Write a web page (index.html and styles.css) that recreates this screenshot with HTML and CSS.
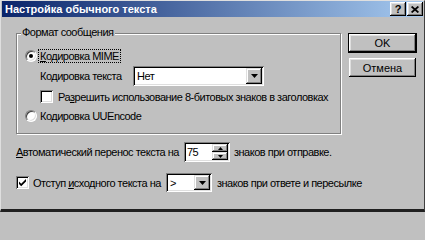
FILE: index.html
```html
<!DOCTYPE html>
<html lang="ru">
<head>
<meta charset="utf-8">
<title>Настройка обычного текста</title>
<link rel="stylesheet" href="styles.css">
</head>
<body>
<div class="window">
  <div class="titlebar">
    <span class="title">Настройка обычного текста</span>
    <div class="tb-buttons">
      <span class="tb-btn help">?</span>
      <span class="tb-btn close"><svg width="8" height="7" viewBox="0 0 8 7"><path d="M0.6 0.5L7.4 6.5M7.4 0.5L0.6 6.5" stroke="#000" stroke-width="1.7" fill="none"/></svg></span>
    </div>
  </div>
  <div class="content">
    <div class="main">
      <div class="group">
        <span class="group-title">Формат сообщения</span>
        <div class="row r-mime"><span class="radio checked"></span><span class="focus"><u>К</u>одировка MIME</span></div>
        <div class="row r-enc">
          <span class="lbl lbl-enc">Кодировка текста</span>
          <div class="combo combo-enc"><span class="combo-val">Нет</span><span class="combo-btn"><svg width="7" height="4" viewBox="0 0 7 4"><path d="M0 0h7L3.5 4z" fill="#000"/></svg></span></div>
        </div>
        <div class="row r-8bit"><span class="check"></span><span class="lbl">Ра<u>з</u>решить использование 8-битовых знаков в заголовках</span></div>
        <div class="row r-uue"><span class="radio"></span><span class="lbl-radio">Кодировка UUEncode</span></div>
      </div>
      <div class="row r-wrap">
        <span class="lbl lbl-wrap"><u>А</u>втоматический перенос текста на</span>
        <div class="spin"><span class="spin-val">75</span><span class="spin-btns"><span class="spin-btn"><svg width="5" height="3" viewBox="0 0 5 3"><path d="M2.5 0L5 3H0z" fill="#000"/></svg></span><span class="spin-btn"><svg width="5" height="3" viewBox="0 0 5 3"><path d="M0 0h5L2.5 3z" fill="#000"/></svg></span></span></div>
        <span class="after after-wrap">знаков при отправке.</span>
      </div>
      <div class="row r-indent">
        <span class="check checked"><svg width="9" height="9" viewBox="0 0 9 9"><path d="M1 3.5L3.2 5.7L8 1V3.4L3.2 8.2L1 6z" fill="#000"/></svg></span>
        <span class="lbl lbl-indent">Отступ <u>и</u>сходного текста на</span>
        <div class="combo combo-indent"><span class="combo-val">&gt;</span><span class="combo-btn"><svg width="7" height="4" viewBox="0 0 7 4"><path d="M0 0h7L3.5 4z" fill="#000"/></svg></span></div>
        <span class="after after-indent">знаков при ответе и пересылке</span>
      </div>
    </div>
    <div class="side">
      <button class="btn default">OK</button>
      <button class="btn cancel">Отмена</button>
    </div>
  </div>
</div>
</body>
</html>
```
FILE: styles.css
```css
html, body {
  margin: 0;
  padding: 0;
  background: #c0c0c0;
}
body {
  font-family: "Liberation Sans", Arial, sans-serif;
  font-size: 11px;
  letter-spacing: -0.5px;
  color: #000;
}
.window {
  width: 425px;
  height: 212px;
  box-sizing: border-box;
  background: #c0c0c0;
  border-top: 1px solid #dfdfdf;
  border-left: 1px solid #dfdfdf;
  border-right: 1px solid #404040;
  border-bottom: 3px solid #202020;
  padding: 0 1px;
  display: flex;
  flex-direction: column;
}
.titlebar {
  height: 16px;
  flex: none;
  display: flex;
  align-items: center;
  justify-content: space-between;
  padding: 0 0 0 3px;
  background: linear-gradient(to right, #0a246a, #a6caf0);
  color: #fff;
}
.title {
  font-weight: bold;
  font-size: 11px;
  letter-spacing: 0;
  line-height: 16px;
}
.tb-buttons {
  display: flex;
  gap: 1px;
}
.tb-btn {
  width: 16px;
  height: 14px;
  box-sizing: border-box;
  background: #c0c0c0;
  box-shadow: inset -1px -1px #000, inset 1px 1px #fff, inset -2px -2px #808080, inset 2px 2px #dfdfdf;
  display: flex;
  align-items: center;
  justify-content: center;
  color: #000;
}
.help {
  font-weight: bold;
  font-size: 11px;
  letter-spacing: 0;
  line-height: 14px;
}
.content {
  display: flex;
  padding: 16px 0 0 14px;
}
.main {
  width: 325px;
  flex: none;
}
.group {
  position: relative;
  height: 101px;
  box-sizing: border-box;
  border: 1px solid #808080;
  box-shadow: inset 1px 1px 0 #fff, 1px 1px 0 #fff;
  padding: 15px 8px 0 8px;
}
.group-title {
  position: absolute;
  top: -8px;
  left: 4px;
  padding: 0 1px;
  background: #c0c0c0;
  line-height: 13px;
}
.row {
  display: flex;
  align-items: center;
  white-space: nowrap;
}
.row > * {
  flex: none;
}
.r-mime {
  height: 14px;
}
.radio {
  width: 12px;
  height: 12px;
  box-sizing: border-box;
  border-radius: 50%;
  background: #fff;
  border: 1px solid;
  border-color: #808080 #fff #fff #808080;
  box-shadow: inset 1px 1px 0 #404040, inset -1px -1px 0 #dfdfdf;
  display: flex;
  align-items: center;
  justify-content: center;
  margin-right: 1px;
}
.radio.checked::after {
  content: "";
  width: 4px;
  height: 4px;
  border-radius: 50%;
  background: #000;
}
.focus {
  border: 1px dotted #000;
  padding: 0 1px;
  line-height: 12px;
}
.lbl-radio {
  padding-left: 2px;
}
.r-enc {
  margin-top: 3px;
  padding-left: 15px;
  height: 20px;
}
.lbl-enc {
  width: 93px;
}
.combo {
  display: flex;
  box-sizing: border-box;
  background: #fff;
  padding: 2px;
  box-shadow: inset 1px 1px #808080, inset -1px -1px #fff, inset 2px 2px #000, inset -2px -2px #dfdfdf;
}
.combo-enc {
  width: 131px;
  height: 20px;
}
.combo-val {
  flex: 1;
  padding-left: 2px;
  line-height: 16px;
}
.combo-btn {
  width: 16px;
  background: #c0c0c0;
  box-shadow: inset -1px -1px #000, inset 1px 1px #dfdfdf, inset -2px -2px #808080, inset 2px 2px #fff;
  display: flex;
  align-items: center;
  justify-content: center;
}
.r-8bit {
  margin-top: 4px;
  padding-left: 15px;
  height: 13px;
}
.check {
  width: 13px;
  height: 13px;
  box-sizing: border-box;
  background: #fff;
  box-shadow: inset 1px 1px #808080, inset -1px -1px #fff, inset 2px 2px #000, inset -2px -2px #dfdfdf;
  display: flex;
  align-items: center;
  justify-content: center;
  margin-right: 5px;
}
.r-uue {
  margin-top: 6px;
  height: 14px;
}
.r-wrap {
  margin-top: 8px;
  height: 20px;
}
.lbl-wrap {
  width: 168px;
}
.spin {
  width: 46px;
  height: 20px;
  box-sizing: border-box;
  display: flex;
  background: #fff;
  padding: 2px;
  box-shadow: inset 1px 1px #808080, inset -1px -1px #fff, inset 2px 2px #000, inset -2px -2px #dfdfdf;
}
.spin-val {
  flex: 1;
  padding-left: 1px;
  line-height: 16px;
}
.spin-btns {
  width: 16px;
  display: flex;
  flex-direction: column;
}
.spin-btn {
  flex: 1;
  background: #c0c0c0;
  box-shadow: inset -1px -1px #000, inset 1px 1px #dfdfdf, inset -2px -2px #808080, inset 2px 2px #fff;
  display: flex;
  align-items: center;
  justify-content: center;
}
.after-wrap {
  margin-left: 4px;
}
.r-indent {
  margin-top: 11px;
  height: 19px;
}
.r-indent .check {
  margin-right: 4px;
}
.lbl-indent {
  width: 133px;
}
.combo-indent {
  width: 46px;
  height: 19px;
}
.after-indent {
  margin-left: 5px;
}
.side {
  display: flex;
  flex-direction: column;
  align-items: flex-start;
  margin-left: 7px;
}
.btn {
  font: inherit;
  letter-spacing: 0;
  color: #000;
  background: #c0c0c0;
  border: none;
  padding: 0;
  margin: 0;
  box-sizing: border-box;
}
.btn.default {
  width: 69px;
  height: 20px;
  border: 1px solid #000;
  box-shadow: inset -1px -1px #000, inset 1px 1px #fff, inset -2px -2px #808080, inset 2px 2px #dfdfdf;
}
.btn.cancel {
  width: 67px;
  height: 19px;
  margin: 5px 0 0 1px;
  box-shadow: inset -1px -1px #000, inset 1px 1px #fff, inset -2px -2px #808080, inset 2px 2px #dfdfdf;
}
```
